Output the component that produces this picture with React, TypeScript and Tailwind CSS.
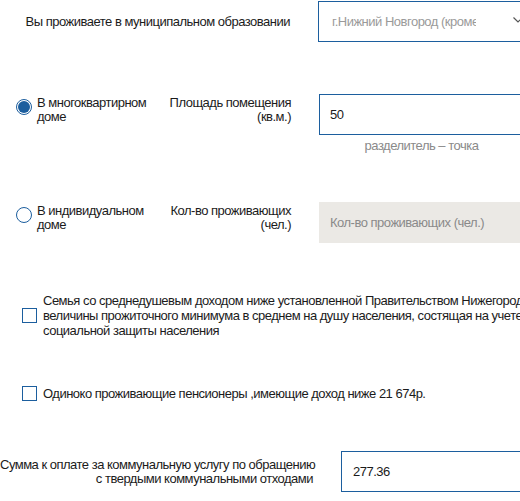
const font = { fontFamily: '"Liberation Sans", Arial, sans-serif' };

const Radio = ({ checked }: { checked?: boolean }) => (
  <span className="flex h-[16px] w-[16px] shrink-0 items-center justify-center rounded-full border-[1.5px] border-[#1c5e9e] bg-white">
    {checked && <span className="h-[12px] w-[12px] rounded-full bg-[#1c5e9e]" />}
  </span>
);

const Checkbox = () => (
  <span className="block h-[15px] w-[15px] shrink-0 border-[1.5px] border-[#1c5e9e] bg-white" />
);

export default function App() {
  return (
    <div className="relative h-[501px] w-[520px] overflow-hidden whitespace-nowrap bg-white text-[13px] leading-[14px] tracking-[-0.5px] text-[#1b1b1b]" style={font}>
      <div className="w-[640px]">
        {/* муниципальное образование */}
        <div className="flex items-center pt-[1px]">
          <div className="w-[290px] text-right">Вы проживаете в муниципальном образовании</div>
          <div className="ml-[28px] flex h-[41px] w-[260px] items-center border-[1.5px] border-[#1c5e9e] pl-[13px] text-[#9a9a9a]">
            <span className="w-[144px] overflow-hidden">г.Нижний Новгород (кроме</span>
            <svg className="ml-[37px] mt-[-4px]" width="10" height="6" viewBox="0 0 10 6" fill="none" stroke="#555" strokeWidth="1.2">
              <path d="M0.5 0.5 L5 5 L9.5 0.5" />
            </svg>
          </div>
        </div>

        {/* многоквартирный */}
        <div className="mt-[52px] flex items-start">
          <div className="flex w-[160px] items-start pl-[16px] pt-[5px]">
            <Radio checked />
            <div className="ml-[5px] -mt-[3px]">В многоквартирном<br />доме</div>
          </div>
          <div className="w-[131px] pt-[2px] text-right">Площадь помещения<br />(кв.м.)</div>
          <div className="ml-[28px] w-[205px]">
            <div className="flex h-[41px] items-center border-[1.5px] border-[#1c5e9e] pl-[10px]">50</div>
            <div className="mt-[4px] text-center text-[#8a8a8a]">разделитель – точка</div>
          </div>
        </div>

        {/* индивидуальный */}
        <div className="mt-[49px] flex items-start">
          <div className="flex w-[160px] items-start pl-[16px] pt-[5px]">
            <Radio />
            <div className="ml-[5px] -mt-[3px]">В индивидуальном<br />доме</div>
          </div>
          <div className="w-[131px] pt-[2px] text-right">Кол-во проживающих<br />(чел.)</div>
          <div className="ml-[28px] flex h-[41px] w-[205px] items-center bg-[#ebe9e5] pl-[11px] text-[#8a8a8a]">
            Кол-во проживающих (чел.)
          </div>
        </div>

        {/* семья */}
        <div className="mt-[50px] flex items-center pl-[22px]">
          <Checkbox />
          <div className="ml-[6px] leading-[15px]">
            Семья со среднедушевым доходом ниже установленной Правительством Нижегородской области<br />
            величины прожиточного минимума в среднем на душу населения, состящая на учете в органах<br />
            социальной защиты населения
          </div>
        </div>

        {/* пенсионеры */}
        <div className="mt-[48px] flex items-center pl-[22px]">
          <Checkbox />
          <div className="ml-[6px]">Одиноко проживающие пенсионеры ,имеющие доход ниже 21 674р.</div>
        </div>

        {/* сумма */}
        <div className="mt-[50px] flex items-center">
          <div className="w-[313px] text-right">
            Сумма к оплате за коммунальную услугу по обращению<br />с твердыми коммунальными отходами
          </div>
          <div className="ml-[28px] flex h-[41px] w-[200px] items-center border-[1.5px] border-[#1c5e9e] pl-[11px]">277.36</div>
        </div>
      </div>
    </div>
  );
}
